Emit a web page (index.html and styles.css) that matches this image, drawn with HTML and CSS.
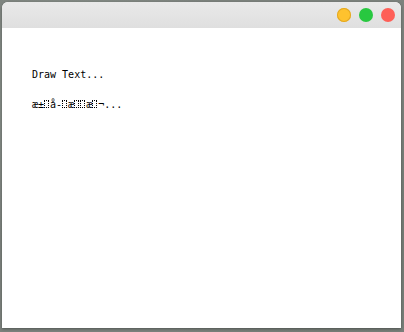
FILE: index.html
```html
<!DOCTYPE html>
<html lang="en">
<head>
<meta charset="UTF-8">
<title>Draw Text</title>
<link rel="stylesheet" href="styles.css">
</head>
<body>
<div class="window">
    <div class="titlebar">
        <span class="btn btn-min"></span>
        <span class="btn btn-max"></span>
        <span class="btn btn-close"></span>
    </div>
    <div class="content">
        <p class="line">Draw Text...</p>
        <p class="line">æ±<span class="miss"></span>å-<span class="miss"></span>æ<span class="miss"></span><span class="miss"></span>æ<span class="miss"></span>¬...</p>
    </div>
</div>
</body>
</html>
```

FILE: styles.css
```css
html, body {
  height: 100%;
}
body {
  margin: 0;
  padding: 2px 3px 4px 2px;
  box-sizing: border-box;
  background-color: #7c827d;
  background-image: radial-gradient(circle at 20% 30%, #8a918b 0, transparent 40%),
                    radial-gradient(circle at 80% 70%, #6f7770 0, transparent 45%);
  font-family: 'DejaVu Sans Mono', monospace;
}
.window {
  height: 100%;
  background-color: #fff;
  border-radius: 6px 6px 0 0;
  display: flex;
  flex-direction: column;
  overflow: hidden;
  box-shadow: 0 1px 3px rgba(0,0,0,0.35);
}
.titlebar {
  height: 26px;
  flex: none;
  background: linear-gradient(#e9e9e9, #dfdfdf);
  display: flex;
  align-items: center;
  justify-content: flex-end;
  gap: 8px;
  padding-right: 6px;
}
.btn {
  width: 14px;
  height: 14px;
  border-radius: 50%;
}
.btn-min {
  background-color: #fec22e;
  box-shadow: inset 0 0 0 1px #e2a823;
}
.btn-max {
  background-color: #28c840;
}
.btn-close {
  background-color: #fe5f57;
}
.content {
  padding: 40px 30px;
}
.line {
  margin: 0 0 17px;
  font-size: 10px;
  line-height: 13px;
  color: #000;
}
.miss {
  display: inline-block;
  width: 5px;
  height: 8px;
  margin-right: 1px;
  border: 1px dotted #000;
  box-sizing: border-box;
}
```
